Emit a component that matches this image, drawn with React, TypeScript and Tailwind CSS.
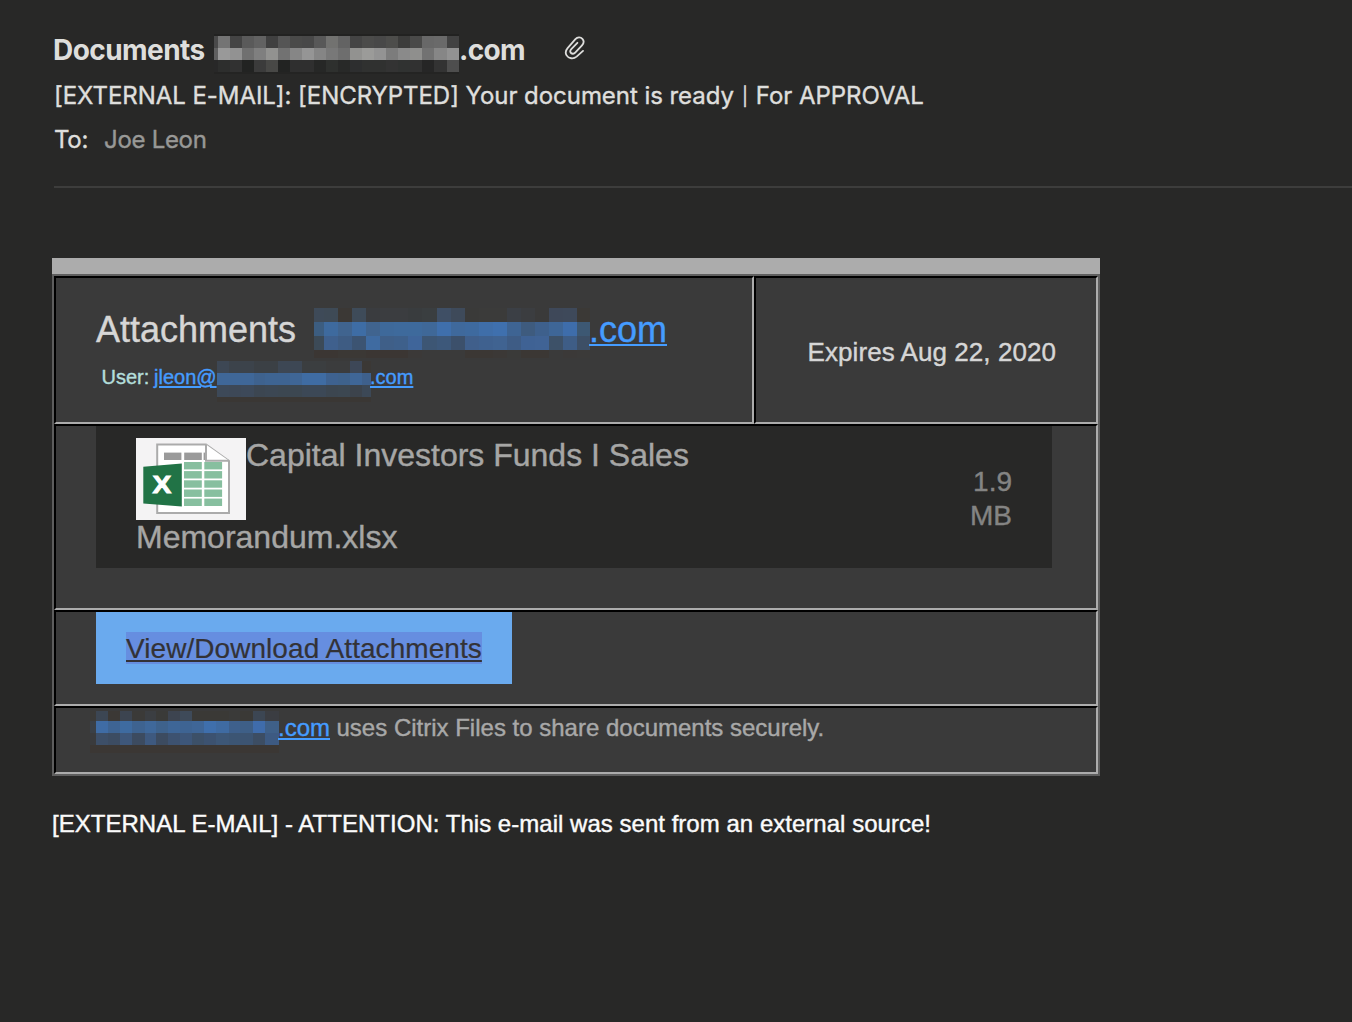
import React from "react";

type Band = { y: number; h: number; colors: string[] };

/** Pixelated block that hides a redacted domain name. */
function Mosaic({
  width,
  height,
  edges,
  bands,
  className,
}: {
  width: number;
  height: number;
  edges: number[];
  bands: Band[];
  className: string;
}) {
  return (
    <svg
      width={width}
      height={height}
      viewBox={`0 0 ${width} ${height}`}
      className={className}
      shapeRendering="crispEdges"
      aria-hidden="true"
    >
      {bands.map((band, b) =>
        band.colors.map((fill, i) => {
          const end = band.colors.length === 1 ? width : edges[i + 1];
          return (
            <rect key={`${b}-${i}`} x={edges[i]} y={band.y} width={end - edges[i]} height={band.h} fill={fill} />
          );
        }),
      )}
    </svg>
  );
}

const senderEdges = [0, 4, 16, 28, 40, 52, 64, 76, 88, 100, 112, 124, 136, 148, 160, 172, 184, 196, 208, 220, 233, 245];
const senderBands: Band[] = [
  { y: 0, h: 2, colors: ["#222221"] },
  {
    y: 2,
    h: 12,
    colors: "#4a4a4a #747474 #444444 #5a5a5a #626262 #404040 #555555 #4a4a49 #484848 #585858 #727270 #636363 #444444 #4b4b4a #484848 #4d4d4b #3c3c3b #4a4a49 #686868 #6a6a6a #424242".split(" "),
  },
  {
    y: 14,
    h: 12,
    colors: "#606060 #999999 #929292 #707070 #7f7f7f #929290 #727272 #868686 #959595 #858585 #787878 #6e6e6e #929290 #9b9b99 #939393 #7c7c7c #8a8a8a #8f8f8d #727272 #868686 #929292".split(" "),
  },
  {
    y: 26,
    h: 12,
    colors: "#282828 #2d2e2d #313131 #222322 #3b3b3b #484846 #222322 #2f2f2f #2f2f2f #262726 #2e302e #282928 #2d2e2f #303130 #303130 #333333 #303231 #313131 #262626 #333333 #4e4e4e".split(" "),
  },
  { y: 38, h: 2, colors: ["#242423"] },
];

const titleEdges = [0, 10, 24, 38, 52, 66, 80, 94, 108, 123, 137, 151, 165, 179, 193, 207, 221, 235, 249, 263, 276];
const titleBands: Band[] = [
  {
    y: 0,
    h: 14,
    colors: "#3e4a58 #3e4a56 #3b3835 #3e4b59 #3a3c3f #3b3d40 #3b3d40 #393c3e #3a3e40 #3f4f65 #3e4a5a #3a3a39 #3b3b3a #3b3b3a #3b3f45 #3b3d40 #3a3a3a #3e4859 #3e495a #3b3936".split(" "),
  },
  {
    y: 14,
    h: 14,
    colors: "#3c5d80 #3e6a9e #40648f #3e6da5 #40648f #3e699a #3e6a9c #3e6a9c #3f6898 #3f6fac #3f699c #3e6a9f #3f6ea9 #3f70ae #3e6493 #3e5b7e #3e608c #3e6697 #3e6dab #3d5873".split(" "),
  },
  {
    y: 28,
    h: 14,
    colors: "#3c4a57 #3f608d #3e5c83 #3c5472 #3f6ba1 #3f5f88 #3e608b #3f659a #3d5674 #3d587a #3c506b #405f8b #3f618f #406391 #3e5c85 #3f6294 #406395 #3d5168 #3e5d86 #3d4f66".split(" "),
  },
  {
    y: 42,
    h: 8,
    colors: "#3b3633 #3b3633 #3b3835 #3b3835 #3b3633 #3b3633 #3b3633 #3b3938 #3a3a3a #3a3a3a #3a3a3a #3b3734 #3b3734 #3b3836 #3a3a39 #3b3734 #3b3734 #3a3a3a #3b3938 #3b3a39".split(" "),
  },
];

const userEdges = [0, 12, 24, 37, 48, 61, 73, 85, 97, 109, 121, 133, 145, 154];
const userBands: Band[] = [
  {
    y: 0,
    h: 12,
    colors: "#3d4754 #3c434b #3c434b #3b4045 #3b4045 #3d4754 #3d4754 #3b3e40 #3b3e40 #3b3c3d #3b3c3d #3d4757 #3b3835".split(" "),
  },
  {
    y: 12,
    h: 12,
    colors: "#3f6798 #3f6798 #3f6798 #3e628e #3e6492 #3e6492 #3f6696 #3f6ca3 #3f6ca3 #3e6290 #3e628c #3f6697 #3e608c".split(" "),
  },
  {
    y: 24,
    h: 12,
    colors: "#3d4958 #3d4857 #3d4959 #3c4651 #3c4753 #3c4751 #3c4751 #3c4856 #3c4856 #3c4650 #3c4751 #3c434c #3c4856".split(" "),
  },
  { y: 36, h: 5, colors: ["#3a3734"] },
];

const footerEdges = [0, 6, 18, 30, 42, 55, 66, 78, 90, 102, 114, 126, 139, 150, 163, 175, 189];
const footerBands: Band[] = [
  {
    y: 0,
    h: 10,
    colors: "#3b3a38 #3c4653 #3b3835 #3c4450 #3b3a38 #3b3e42 #3a3a38 #3d4450 #3e4a59 #3a3936 #3a3936 #3a3936 #3a3a39 #3a3936 #3c4653 #3b3d42".split(" "),
  },
  {
    y: 10,
    h: 12,
    colors: "#3a4047 #3f6ca5 #3e6493 #3e6ba0 #3e6390 #3f689a #3e628c #3e6697 #3e6493 #3f6697 #3f6fac #3f6ba2 #3e608c #3e5f87 #3f6cab #3f6088".split(" "),
  },
  {
    y: 22,
    h: 12,
    colors: "#3a3b3d #3d4f68 #3c4c62 #3e577a #3c4b60 #3e597f #3c4b60 #3d5270 #3d5679 #3c5068 #3c5270 #3d5777 #3c5573 #3c5472 #3c4d63 #3d5a82".split(" "),
  },
  { y: 34, h: 8, colors: ["#3b3734"] },
];

function Paperclip() {
  return (
    <svg width="22" height="24" viewBox="0 0 22 24" className="mt-[4px] ml-[40px] shrink-0" fill="none" stroke="#dededc" strokeWidth="1.8" strokeLinecap="round">
      <path d="M19 14.9 12.6 20.6C9.4 23.3 4.6 22.7 2.6 19.4 1.2 17 1.7 14.3 3.6 12.1L11.4 3.2C13.4 1 16.6.9 18.4 2.8 20 4.6 19.8 7.3 18 9.3L11.2 16.7C10 18 8.1 18.1 7 17 6 16 6.1 14.4 7.3 13.1L13.4 6.8" />
    </svg>
  );
}

function ExcelIcon() {
  const rows = [24, 33.1, 42.3, 51.5, 60.6];
  return (
    <svg width="110" height="82" viewBox="0 0 110 82" className="shrink-0 bg-[#f4f3f4]">
      <path d="M21.2 6.4H70L93 23V75H21.2Z" fill="#fff" stroke="#ababab" strokeWidth="2" />
      <g fill="#9a9a9a">
        <rect x="28" y="14.6" width="17.4" height="7.4" />
        <rect x="48.2" y="14.6" width="17.6" height="7.4" />
        <rect x="67.6" y="14.6" width="2.6" height="7.4" />
      </g>
      <path d="M70 6.4V22.8H93" fill="#fff" stroke="#ababab" strokeWidth="2" />
      <g fill="#87bf9f">
        {rows.map((y) => (
          <React.Fragment key={y}>
            <rect x="48" y={y} width="17.8" height="7.4" />
            <rect x="68.3" y={y} width="17.8" height="7.4" />
          </React.Fragment>
        ))}
      </g>
      <path d="M7.3 28.7 45.8 25.6V68.4L7.3 65.6Z" fill="#217346" />
      <text x="16.4" y="55.3" textLength="18.8" lengthAdjust="spacingAndGlyphs" fill="#fff" stroke="#fff" strokeWidth="0.9" fontFamily="Liberation Sans, sans-serif" fontWeight="700" fontSize="24">
        X
      </text>
    </svg>
  );
}

const cell = "border-2 border-t-black border-l-black border-r-[#acacac] border-b-[#acacac] bg-[#3a3a3a]";
const link = "text-[#459cff] underline decoration-2 underline-offset-[2px]";

export default function App() {
  return (
    <div className="h-[1022px] w-full overflow-hidden bg-[#282827] font-['Liberation_Sans',sans-serif] whitespace-nowrap [-webkit-text-stroke-width:0.4px]">
      <header className="ml-[53px] pt-[32px] font-['Inter',sans-serif] text-[#dededc]">
        <div className="flex h-[48px] items-start text-[28px] leading-[36px] font-bold [-webkit-text-stroke-width:0px]">
          <span className="w-[161px] tracking-[-0.55px]">Documents</span>
          <Mosaic width={245} height={40} edges={senderEdges} bands={senderBands} className="mt-[2px] shrink-0" />
          <span className="w-[65px] tracking-[-0.7px]">.com</span>
          <Paperclip />
        </div>
        <div className="h-[44px] pl-px text-[24px] leading-[32px] tracking-[-0.05px]">
          [EXTERNAL E-MAIL]: [ENCRYPTED] Your document is ready{" "}
          <span className="relative -top-px inline-block w-[8.5px] text-center text-[18px]">|</span> For APPROVAL
        </div>
        <div className="flex pl-px text-[24px] leading-[32px]">
          <span className="w-[50px] tracking-[-0.3px]">To:</span>
          <span className="tracking-[-0.3px] text-[#989896]">Joe Leon</span>
        </div>
        <div className="mt-[30px] ml-px h-[2px] bg-[#3d3d3c]" />
      </header>

      <main className="mt-[70px] ml-[52px] w-[1048px]">
        <div className="h-[16px] bg-[#acacac]" />
        <div className="border-2 border-[#5e5e5e]">
          <div className="flex h-[148px]">
            <div className={`${cell} w-[700px] pt-[30px] pl-[40px]`}>
              <div className="flex h-[53px] items-start text-[36px] leading-[44px]">
                <span className="w-[218px] text-[#d6d6d6]">Attachments</span>
                <Mosaic width={276} height={50} edges={titleEdges} bands={titleBands} className="shrink-0" />
                <span className={`${link} -ml-px`}>.com</span>
              </div>
              <div className="flex h-[41px] items-start pl-[5.5px] text-[20px] leading-[32px]">
                <span className="w-[52.5px] text-[#b3dedb]">User:</span>
                <span className={`${link} w-[63px]`}>jleon@</span>
                <Mosaic width={154} height={41} edges={userEdges} bands={userBands} className="shrink-0" />
                <span className={`${link} -ml-px`}>.com</span>
              </div>
            </div>
            <div className={`${cell} flex grow items-center justify-end pt-[5px] pr-[40px] text-[26px] tracking-[0.06px] text-[#d6d6d6]`}>
              Expires Aug 22, 2020
            </div>
          </div>

          <div className={`${cell} h-[186px] px-[40px]`}>
            <div className="flex h-[142px] w-[956px] justify-between bg-[#282827] px-[40px] text-[#a6a6a5]">
              <div className="pt-[12px] text-[32px]">
                <div className="flex h-[82px] items-start">
                  <ExcelIcon />
                  <span className="leading-[34px]">Capital Investors Funds I Sales</span>
                </div>
                <div className="leading-[34px]">Memorandum.xlsx</div>
              </div>
              <div className="w-[42px] pt-[39px] text-right text-[28px] leading-[34px] text-[#848483]">
                <div>1.9</div>
                <div>MB</div>
              </div>
            </div>
          </div>

          <div className={`${cell} h-[96px] pl-[40px]`}>
            <div className="h-[72px] w-[416px] bg-[#6aaaee] px-[30px] pt-[20px]">
              <a className="block h-[32px] bg-[#668ee0] text-[28px] leading-[34px] tracking-[0.06px] text-[#333236] underline decoration-2 underline-offset-[2px] [-webkit-text-stroke-width:0.2px]">
                View/Download Attachments
              </a>
            </div>
          </div>

          <div className={`${cell} flex h-[68px] items-start pt-[3px] pl-[34px] text-[24px] leading-[34px] text-[#a8a8a8]`}>
            <Mosaic width={189} height={42} edges={footerEdges} bands={footerBands} className="shrink-0" />
            <span className={`${link} -ml-px`}>.com</span>
            <span className="ml-[6.5px]">uses Citrix Files to share documents securely.</span>
          </div>
        </div>
      </main>

      <p className="mt-[32px] ml-[52px] text-[24px] leading-[32px] tracking-[0.025px] text-[#fbfbfb]">
        [EXTERNAL E-MAIL] - ATTENTION: This e-mail was sent from an external source!
      </p>
    </div>
  );
}
